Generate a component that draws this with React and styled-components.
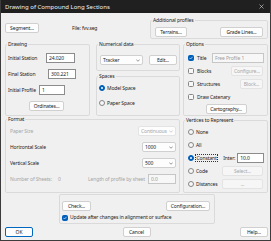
import React from 'react';
import styled, { createGlobalStyle } from 'styled-components';

const Global = createGlobalStyle`
  html, body { margin: 0; padding: 0; background: #f0f0f0; }
  body { font-family: "Noto Sans", sans-serif; }
  *, *::before, *::after { box-sizing: border-box; }
`;

const FS = '5px';
const LS = '-0.12px';

const Window = styled.div`
  width: 271px;
  height: 241px;
  background: #f0f0f0;
  border: 1px solid #3c3c3c;
  border-top: none;
  display: flex;
  flex-direction: column;
  overflow: hidden;
  font-family: "Noto Sans", sans-serif;
  font-size: ${FS};
  letter-spacing: ${LS};
  color: #1b1b1b;
`;

const TitleBar = styled.div`
  height: 13px;
  flex-shrink: 0;
  background: #202020;
  color: #f2f2f2;
  display: flex;
  align-items: center;
  justify-content: space-between;
  padding: 0 6px 0 4px;
  font-size: 6px;
  letter-spacing: 0;
`;

const Body = styled.div`
  flex: 1;
  display: flex;
  flex-direction: column;
  padding: 4px 2px 0 4px;
`;

const TopRow = styled.div`
  display: flex;
  align-items: flex-start;
  height: 22px;
`;

const Text = styled.span`
  line-height: 7px;
  white-space: nowrap;
  flex-shrink: 0;
  color: ${p => (p.$disabled ? '#a6a6a6' : '#1b1b1b')};
  width: ${p => (p.$w ? `${p.$w}px` : 'auto')};
  margin-left: ${p => p.$ml || 0}px;
  margin-top: ${p => p.$mt || 0}px;
`;

const Group = styled.fieldset`
  margin: 0;
  padding: 0;
  min-width: 0;
  border: 1px solid #dadada;
  border-radius: 2px;
  width: ${p => (p.$w ? `${p.$w}px` : 'auto')};
  height: ${p => p.$h}px;
  margin-left: ${p => (p.$auto ? 'auto' : `${p.$ml || 0}px`)};
  margin-top: ${p => p.$mt || 0}px;
  flex-shrink: 0;
`;

const Legend = styled.legend`
  margin-left: 1px;
  padding: 0 1px;
  line-height: 7px;
  font-size: ${FS};
  color: #1b1b1b;
`;

const GroupBody = styled.div`
  display: flex;
  flex-direction: column;
  gap: ${p => p.$gap || 0}px;
  padding: ${p => p.$pad};
`;

const Row = styled.div`
  display: flex;
  align-items: center;
  height: ${p => p.$h || 10}px;
  gap: ${p => p.$gap || 0}px;
  margin-top: ${p => p.$mt || 0}px;
`;

const Button = styled.button`
  height: 10px;
  width: ${p => p.$w}px;
  flex-shrink: 0;
  margin: 0;
  margin-left: ${p => (p.$auto ? 'auto' : `${p.$ml || 0}px`)};
  margin-top: ${p => p.$mt || 0}px;
  margin-right: ${p => p.$mr || 0}px;
  align-self: ${p => p.$self || 'auto'};
  padding: 0;
  font-family: inherit;
  font-size: ${FS};
  letter-spacing: ${LS};
  line-height: 8px;
  text-align: center;
  white-space: nowrap;
  background: ${p => (p.disabled ? '#f6f6f6' : '#fdfdfd')};
  color: ${p => (p.disabled ? '#a6a6a6' : '#1b1b1b')};
  border: 1px solid ${p => (p.$default ? '#0067c0' : p.disabled ? '#e3e3e3' : '#d0d0d0')};
  border-radius: 2px;
`;

const Input = styled.input`
  height: 10px;
  width: ${p => p.$w}px;
  flex-shrink: 0;
  margin: 0;
  margin-left: ${p => (p.$auto ? 'auto' : `${p.$ml || 0}px`)};
  padding: 0 2px;
  font-family: inherit;
  font-size: ${FS};
  letter-spacing: ${LS};
  color: ${p => (p.disabled ? '#9d9d9d' : '#1b1b1b')};
  background: ${p => (p.disabled ? '#f7f7f7' : '#ffffff')};
  border: 1px solid ${p => (p.disabled ? '#c6c6c6' : '#8c8c8c')};
  border-radius: 0;
  outline: none;
`;

const Select = styled.div`
  height: 10px;
  width: ${p => p.$w}px;
  flex-shrink: 0;
  margin-left: ${p => (p.$auto ? 'auto' : `${p.$ml || 0}px`)};
  display: flex;
  align-items: center;
  justify-content: space-between;
  gap: 1px;
  padding: 0 2px 0 2px;
  background: #fdfdfd;
  border: 1px solid ${p => (p.$disabled ? '#e3e3e3' : '#d0d0d0')};
  border-radius: 2px;
  color: ${p => (p.$disabled ? '#a6a6a6' : '#1b1b1b')};
  line-height: 8px;
  white-space: nowrap;
`;

const Check = styled.span`
  width: 6px;
  height: 6px;
  flex-shrink: 0;
  border-radius: 1.5px;
  display: flex;
  align-items: center;
  justify-content: center;
  background: ${p => (p.$on ? '#005fb8' : '#f7f7f7')};
  border: 1px solid ${p => (p.$on ? '#005fb8' : '#858585')};
`;

const Radio = styled.span`
  width: 6px;
  height: 6px;
  flex-shrink: 0;
  border-radius: 50%;
  display: flex;
  align-items: center;
  justify-content: center;
  background: ${p => (p.$on ? '#005fb8' : '#f7f7f7')};
  border: 1px solid ${p => (p.$on ? '#005fb8' : '#858585')};
  &::after {
    content: '';
    display: ${p => (p.$on ? 'block' : 'none')};
    width: 2.5px;
    height: 2.5px;
    border-radius: 50%;
    background: #ffffff;
  }
`;

const Focus = styled.span`
  line-height: 6px;
  padding: 0 0.5px;
  outline: 1px dotted #333;
  outline-offset: 0;
  white-space: nowrap;
`;

const MainGrid = styled.div`
  display: grid;
  grid-template-columns: 175px 85px;
  grid-template-rows: 75px 77px;
  column-gap: 3px;
  margin-top: 2px;
`;

const LeftTop = styled.div`
  display: flex;
  gap: 6px;
`;

const Stack = styled.div`
  display: flex;
  flex-direction: column;
  gap: 2px;
`;

const ButtonBar = styled.div`
  display: flex;
  justify-content: space-between;
  margin-top: 3px;
`;

const Chevron = ({ color = '#555' }) => (
  <svg width="4" height="3" viewBox="0 0 8 5" fill="none" style={{ flexShrink: 0 }}>
    <path d="M1 1l3 3 3-3" stroke={color} strokeWidth="1.2" strokeLinecap="round" strokeLinejoin="round" />
  </svg>
);

const Tick = () => (
  <svg width="4" height="4" viewBox="0 0 8 8" fill="none">
    <path d="M1.3 4.2l1.8 1.8 3.6-3.8" stroke="#fff" strokeWidth="1.3" strokeLinecap="round" strokeLinejoin="round" />
  </svg>
);

const CloseIcon = () => (
  <svg width="5" height="5" viewBox="0 0 10 10" fill="none">
    <path d="M1 1l8 8M9 1l-8 8" stroke="#e8e8e8" strokeWidth="1.1" />
  </svg>
);

export default function App() {
  return (
    <>
      <Global />
      <Window>
        <TitleBar>
          <span>Drawing of Compound Long Sections</span>
          <CloseIcon />
        </TitleBar>
        <Body>
          <TopRow>
            <Button $w={34} $mt={6}>Segment...</Button>
            <Text $ml={33} $mt={8}>File: fvv.seg</Text>
            <Group $w={118} $h={22} $auto>
              <Legend>Additional profiles</Legend>
              <GroupBody $pad="3px 4px 0 4px">
                <Row>
                  <Button $w={32}>Terrains...</Button>
                  <Button $w={43} $auto>Grade Lines...</Button>
                </Row>
              </GroupBody>
            </Group>
          </TopRow>

          <MainGrid>
            <LeftTop>
              <Group $w={85} $h={75}>
                <Legend>Drawing</Legend>
                <GroupBody $pad="5px 0 0 2px" $gap={6}>
                  <Row>
                    <Text $w={38}>Initial Station</Text>
                    <Input $w={29} readOnly value="24.020" />
                  </Row>
                  <Row>
                    <Text $w={40}>Final Station</Text>
                    <Input $w={28} readOnly value="300.221" />
                  </Row>
                  <Row>
                    <Text $w={31}>Initial Profile</Text>
                    <Input $w={26} readOnly value="1" />
                  </Row>
                  <Button $w={35} $ml={21} $self="flex-start">Ordinates...</Button>
                </GroupBody>
              </Group>
              <Stack>
                <Group $w={84} $h={30}>
                  <Legend>Numerical data</Legend>
                  <GroupBody $pad="7px 0 0 3px">
                    <Row $gap={6}>
                      <Select $w={43}>
                        <span>Tracker</span>
                        <Chevron />
                      </Select>
                      <Button $w={28}>Edit...</Button>
                    </Row>
                  </GroupBody>
                </Group>
                <Group $w={84} $h={43}>
                  <Legend>Spaces</Legend>
                  <GroupBody $pad="4px 0 0 2px" $gap={7}>
                    <Row $h={8} $gap={2}>
                      <Radio $on />
                      <Text>Model Space</Text>
                    </Row>
                    <Row $h={8} $gap={2}>
                      <Radio />
                      <Text>Paper Space</Text>
                    </Row>
                  </GroupBody>
                </Group>
              </Stack>
            </LeftTop>

            <Group $h={75}>
              <Legend>Options</Legend>
              <GroupBody $pad="5px 3px 0 4px" $gap={3}>
                <Row $gap={3}>
                  <Check $on><Tick /></Check>
                  <Text>Title</Text>
                  <Input $w={52} $auto disabled value="Free Profile 1" readOnly />
                </Row>
                <Row $gap={3}>
                  <Check />
                  <Text>Blocks</Text>
                  <Button $w={32} $auto $mr={1} disabled>Configure...</Button>
                </Row>
                <Row $gap={3}>
                  <Check />
                  <Text>Structures</Text>
                  <Button $w={23} $auto $mr={1} disabled>Block...</Button>
                </Row>
                <Row $gap={3}>
                  <Check />
                  <Text>Draw Catenary</Text>
                </Row>
                <Button $w={41} $self="center" $mt={-1}>Cartography...</Button>
              </GroupBody>
            </Group>

            <Group $h={77}>
              <Legend>Format</Legend>
              <GroupBody $pad="3px 3px 0 4px" $gap={6}>
                <Row>
                  <Text $disabled>Paper Size</Text>
                  <Select $w={38} $auto $disabled>
                    <span>Continuous</span>
                    <Chevron color="#b0b0b0" />
                  </Select>
                </Row>
                <Row>
                  <Text>Horizontal Scale</Text>
                  <Select $w={34} $auto>
                    <span>1000</span>
                    <Chevron />
                  </Select>
                </Row>
                <Row>
                  <Text>Vertical Scale</Text>
                  <Select $w={34} $auto>
                    <span>500</span>
                    <Chevron />
                  </Select>
                </Row>
                <Row>
                  <Text $disabled $w={48}>Number of Sheets:</Text>
                  <Text $disabled $w={30}>0</Text>
                  <Text $disabled>Length of profile by sheet</Text>
                  <Input $w={28} $auto disabled readOnly value="0.0" />
                </Row>
              </GroupBody>
            </Group>

            <Group $h={76} $mt={1}>
              <Legend>Vertices to Represent</Legend>
              <GroupBody $pad="3px 3px 0 4px" $gap={3}>
                <Row $gap={2}>
                  <Radio />
                  <Text>None</Text>
                </Row>
                <Row $gap={2}>
                  <Radio />
                  <Text>All</Text>
                </Row>
                <Row $gap={2}>
                  <Radio $on />
                  <Focus>Constant</Focus>
                  <Text $ml={4}>Inter:</Text>
                  <Input $w={27} $auto readOnly value="10.0" />
                </Row>
                <Row $gap={2}>
                  <Radio />
                  <Text>Code</Text>
                  <Button $w={41} $auto $mr={1} disabled>Select...</Button>
                </Row>
                <Row $gap={2}>
                  <Radio />
                  <Text>Distances</Text>
                  <Button $w={41} $auto $mr={1} disabled>...</Button>
                </Row>
              </GroupBody>
            </Group>
          </MainGrid>

          <Group $w={156} $h={30} $ml={54} $mt={1}>
            <GroupBody $pad="6px 4px 0 2px">
              <Row>
                <Button $w={29}>Check...</Button>
                <Button $w={44} $auto>Configuration...</Button>
              </Row>
              <Row $h={7} $gap={2} $mt={3}>
                <Check $on><Tick /></Check>
                <Text>Update after changes in alignment or surface</Text>
              </Row>
            </GroupBody>
          </Group>

          <ButtonBar>
            <Button $w={28} $default>OK</Button>
            <Button $w={28}>Cancel</Button>
            <Button $w={28}>Help...</Button>
          </ButtonBar>
        </Body>
      </Window>
    </>
  );
}
